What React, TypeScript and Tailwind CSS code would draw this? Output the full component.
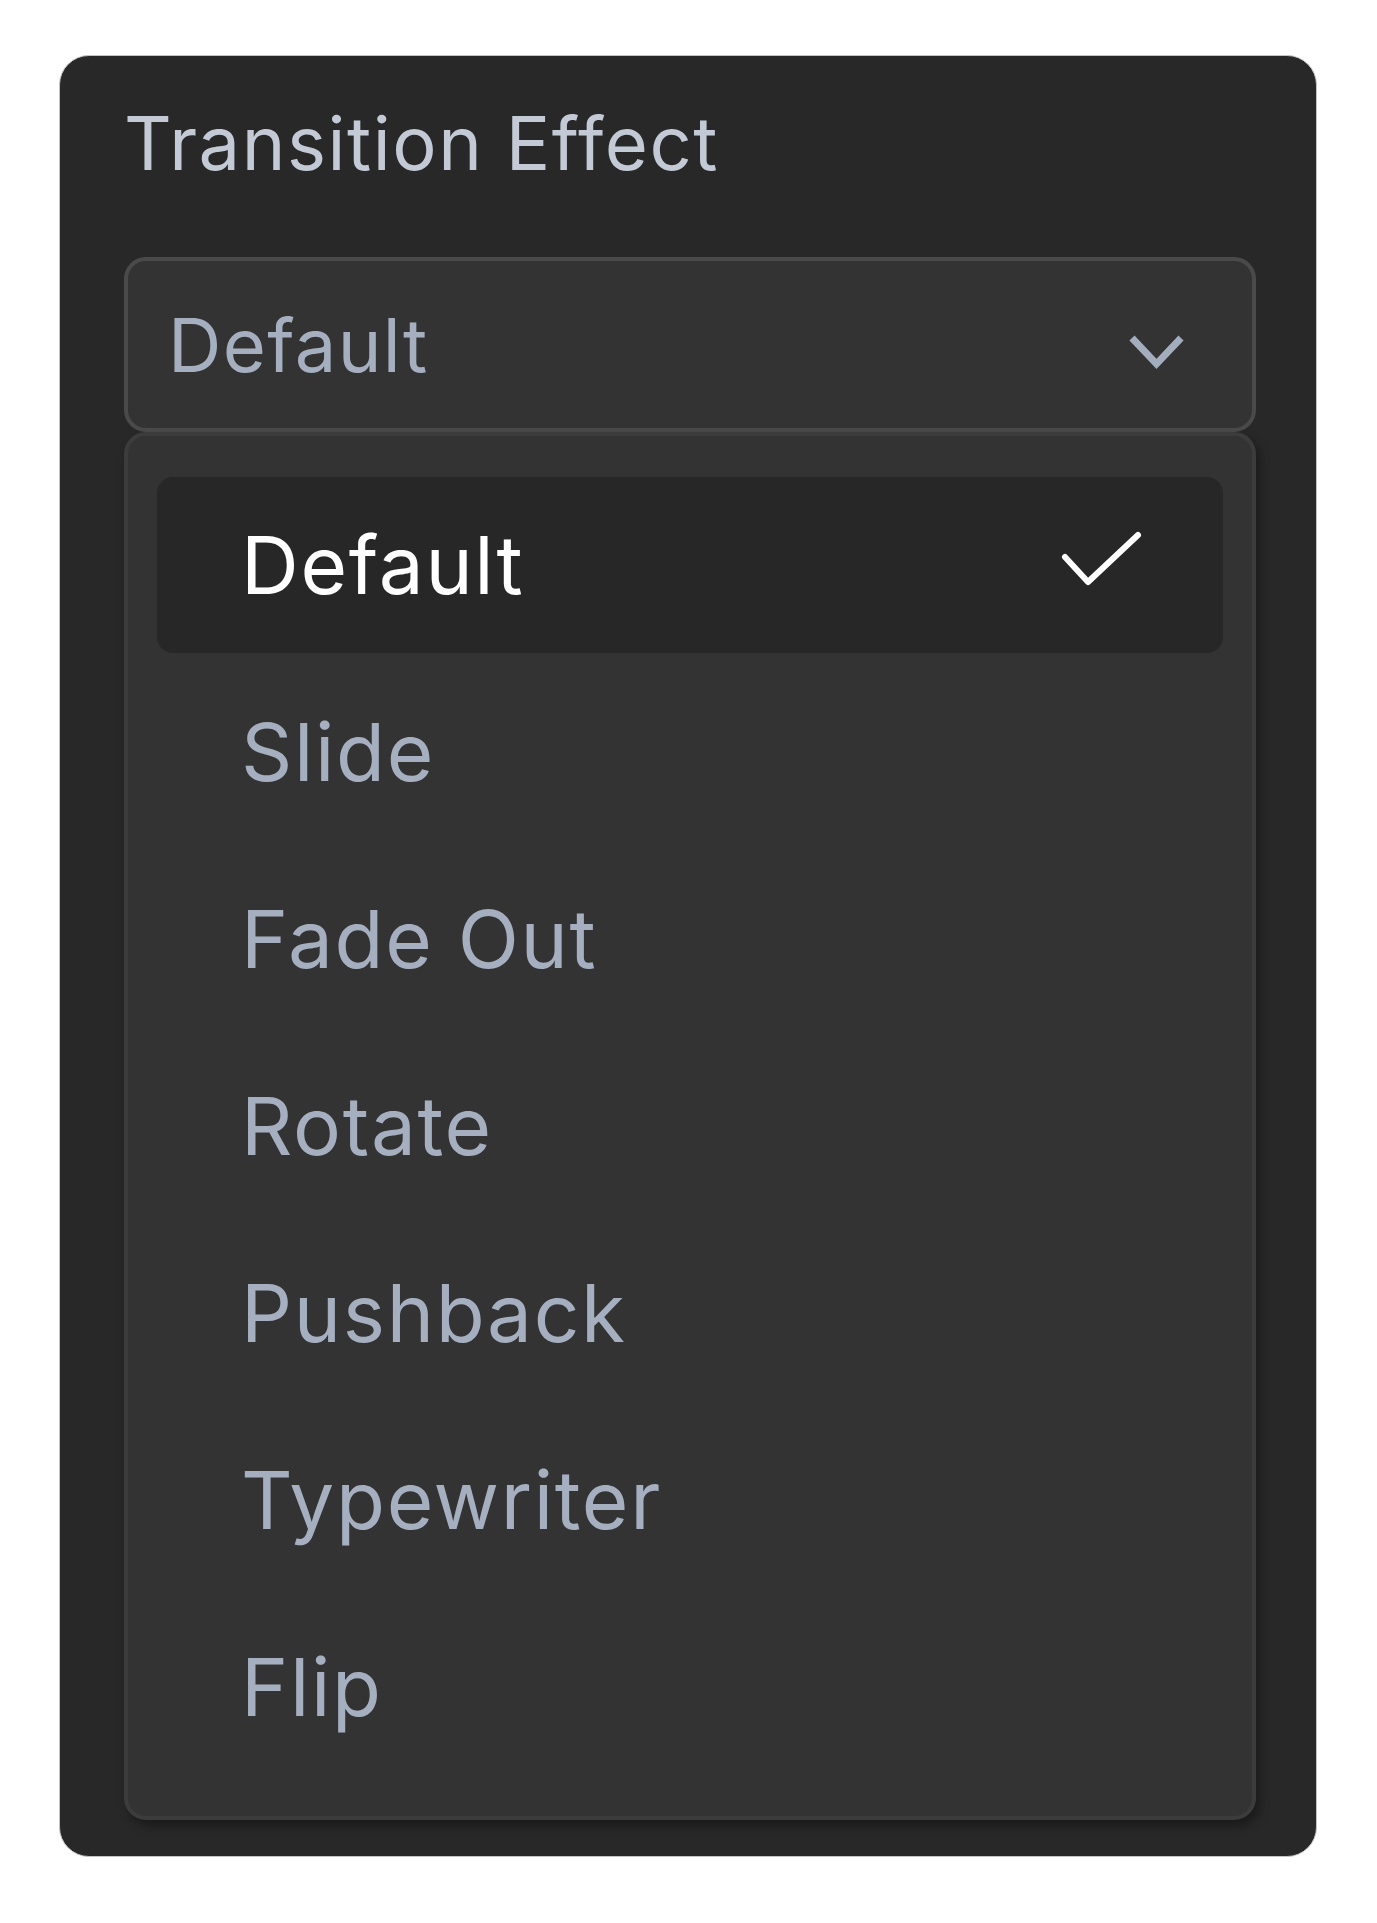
import React from "react";

const OPTIONS = ["Default", "Slide", "Fade Out", "Rotate", "Pushback", "Typewriter", "Flip"];

function ChevronDown() {
  return (
    <svg width="62" height="44" viewBox="0 0 62 44" className="mt-[14px] shrink-0" fill="none">
      <polyline points="6,8 30.5,34 55,8" stroke="#a3adbe" strokeWidth="7" strokeLinejoin="miter" />
    </svg>
  );
}

function Check() {
  return (
    <svg width="88" height="62" viewBox="0 0 88 62" className="mb-[12px] shrink-0" fill="none">
      <polyline
        points="9,29 32,54 82,7"
        stroke="#ffffff"
        strokeWidth="6"
        strokeLinecap="round"
        strokeLinejoin="round"
      />
    </svg>
  );
}

export default function App() {
  const selected = "Default";
  return (
    <div className="min-h-screen bg-white pt-[55px] pl-[59px]" style={{ fontFamily: "Inter, 'Noto Sans', sans-serif" }}>
      <div className="w-[1258px] rounded-[30px] bg-[#282828] border border-[#c4c4c4] pt-[50px] pl-[64px] pr-[60px] pb-[36px]">
        <h2 className="text-[74px] leading-none font-normal tracking-[0.021em] text-[#c3cad5]">Transition Effect</h2>

        <div className="mt-[77px] h-[175px] rounded-[22px] border-4 border-[#4a4a4a] bg-[#333333] flex items-center justify-between pl-[40px] pr-[64px]">
          <span className="text-[74px] leading-none tracking-[0.018em] text-[#a5afbf]">{selected}</span>
          <ChevronDown />
        </div>

        <div className="rounded-[22px] border-4 border-[#3c3c3c] bg-[#333333] px-[29px] py-[41px] flex flex-col gap-[11px] shadow-[4px_6px_10px_rgba(0,0,0,0.35)]">
          {OPTIONS.map((opt) => {
            const active = opt === selected;
            return (
              <div
                key={opt}
                className={
                  active
                    ? "h-[176px] rounded-[16px] bg-[#272727] flex items-center justify-between pl-[84px] pr-[79px]"
                    : "h-[176px] rounded-[16px] flex items-center justify-between pl-[84px] pr-[79px]"
                }
              >
                <span
                  className={
                    active
                      ? "text-[80px] leading-none tracking-[0.021em] text-white"
                      : "text-[80px] leading-none tracking-[0.021em] text-[#a5afc0]"
                  }
                >
                  {opt}
                </span>
                {active ? <Check /> : null}
              </div>
            );
          })}
        </div>
      </div>
    </div>
  );
}
